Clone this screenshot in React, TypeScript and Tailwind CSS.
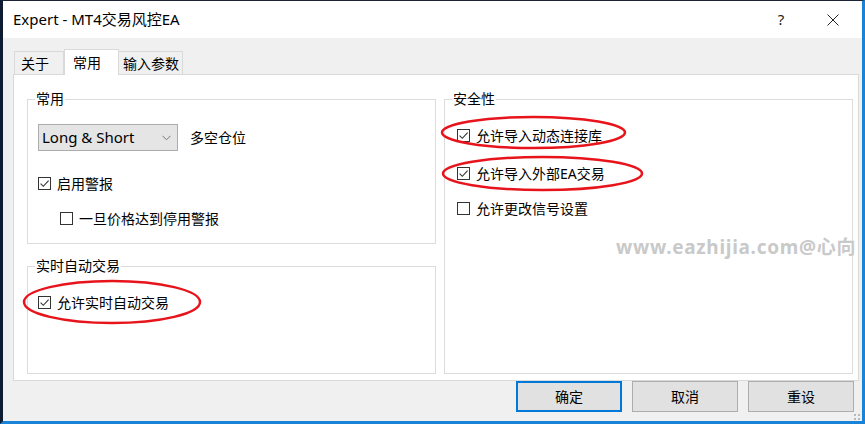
import clsx from "clsx";

const CheckMark = () => (
  <svg width="11" height="11" viewBox="0 0 11 11">
    <path d="M1.6 5.6 L4.3 8.3 L9.6 2.6" fill="none" stroke="#333" strokeWidth="1.1" />
  </svg>
);

const Check = ({ checked, label, className }: { checked?: boolean; label: string; className?: string }) => (
  <div className={clsx("flex items-center h-[13px]", className)}>
    <span className="w-[13px] h-[13px] shrink-0 border border-[#333] bg-white flex items-center justify-center">
      {checked && <CheckMark />}
    </span>
    <span className="ml-[6px] text-[14px] leading-none whitespace-nowrap text-black">{label}</span>
  </div>
);

const Group = ({ title, className, children }: { title: string; className?: string; children: React.ReactNode }) => (
  <div className={clsx("relative border border-[#dcdcdc]", className)}>
    <span className="absolute -top-[10px] left-[7px] bg-white px-[1px] text-[14px] leading-[18px] text-black">{title}</span>
    {children}
  </div>
);

export default function App() {
  return (
    <div className="relative w-[865px] h-[424px] flex flex-col bg-[#f0f0f0] border-t border-t-[#1c2536] border-l-[3px] border-l-[#0d1b33] border-r-[3px] border-r-[#1883d7] border-b-[3px] border-b-[#1883d7] font-['Noto_Sans','Noto_Sans_CJK_SC',sans-serif] text-black overflow-hidden">
      {/* Title bar */}
      <div className="h-[37px] shrink-0 bg-white flex items-center pl-[10px]">
        <span className="text-[15px]">Expert - MT4交易风控EA</span>
        <div className="ml-auto flex h-full">
          <div className="w-[46px] flex items-center justify-center text-[15px] text-[#222]">?</div>
          <div className="w-[58px] flex items-center justify-center">
            <svg width="12" height="12" viewBox="0 0 12 12">
              <path d="M0.5 0.5 L11.5 11.5 M11.5 0.5 L0.5 11.5" stroke="#222" strokeWidth="1" />
            </svg>
          </div>
        </div>
      </div>

      {/* Tabs */}
      <div className="mt-[11px] ml-[11px] h-[25px] flex items-end text-[14px]">
        <div className="w-[50px] h-[23px] border border-b-0 border-[#d9d9d9] pl-[6px] flex items-center">关于</div>
        <div className="relative z-10 w-[55px] h-[26px] -mb-px bg-white border border-b-0 border-[#d9d9d9] pl-[8px] flex items-center">常用</div>
        <div className="w-[64px] h-[23px] border border-b-0 border-l-0 border-[#d9d9d9] pl-[4px] flex items-center">输入参数</div>
      </div>

      {/* Panel */}
      <div className="ml-[10px] w-[846px] h-[307px] shrink-0 bg-white border border-[#d9d9d9] pt-[24px] pl-[13px] pr-[5px] pb-[6px] flex gap-[8px]">
        <div className="w-[409px] flex flex-col gap-[22px]">
          <Group title="常用" className="h-[145px] pt-[24px] pl-[10px]">
            <div className="flex items-center">
              <div className="w-[140px] h-[27px] bg-[#e5e5e5] border border-[#acacac] flex items-center pl-[3px] pr-[6px]">
                <span className="text-[15px]">Long &amp; Short</span>
                <svg className="ml-auto" width="9" height="6" viewBox="0 0 9 6">
                  <path d="M0.5 0.8 L4.5 4.8 L8.5 0.8" fill="none" stroke="#777" strokeWidth="1" />
                </svg>
              </div>
              <span className="ml-[12px] text-[14px]">多空仓位</span>
            </div>
            <Check checked label="启用警报" className="mt-[26px]" />
            <Check label="一旦价格达到停用警报" className="mt-[22px] ml-[22px]" />
          </Group>
          <Group title="实时自动交易" className="h-[108px] pt-[29px] pl-[10px]">
            <Check checked label="允许实时自动交易" />
          </Group>
        </div>
        <Group title="安全性" className="w-[409px] h-[275px] pt-[29px] pl-[12px]">
          <Check checked label="允许导入动态连接库" />
          <Check checked label="允许导入外部EA交易" className="mt-[25px]" />
          <Check label="允许更改信号设置" className="mt-[22px]" />
        </Group>
      </div>

      {/* Buttons */}
      <div className="h-[31px] shrink-0 flex justify-end gap-[10px] pr-[8px] text-[14px]">
        <button className="w-[106px] h-full bg-[#e1e1e1] border-2 border-[#0078d7]">确定</button>
        <button className="w-[106px] h-full bg-[#e1e1e1] border border-[#adadad]">取消</button>
        <button className="w-[106px] h-full bg-[#e1e1e1] border border-[#adadad]">重设</button>
      </div>

      {/* Resize grip */}
      <div className="absolute right-[2px] bottom-[1px] grid grid-cols-2 gap-[2px]">
        <span className="w-[2px] h-[2px] bg-[#b8b8b8]" />
        <span className="w-[2px] h-[2px] bg-[#b8b8b8]" />
        <span className="w-[2px] h-[2px] bg-[#b8b8b8]" />
        <span className="w-[2px] h-[2px] bg-[#b8b8b8]" />
      </div>

      {/* Watermark */}
      <div className="absolute left-[613px] top-[232px] text-[19px] font-bold tracking-[0.7px] text-[#c9c9c9] whitespace-nowrap">
        www.eazhijia.com@心向
      </div>

      {/* Red annotation ellipses */}
      <svg className="absolute left-[-3px] top-[-1px] pointer-events-none" width="865" height="424">
        <ellipse cx="112" cy="302" rx="88" ry="21" fill="none" stroke="#e8141c" strokeWidth="2.5" />
        <ellipse cx="533.5" cy="132.5" rx="91.5" ry="15.5" fill="none" stroke="#e8141c" strokeWidth="2.5" />
        <ellipse cx="542.5" cy="173.5" rx="99.5" ry="16.5" fill="none" stroke="#e8141c" strokeWidth="2.5" />
      </svg>
    </div>
  );
}
